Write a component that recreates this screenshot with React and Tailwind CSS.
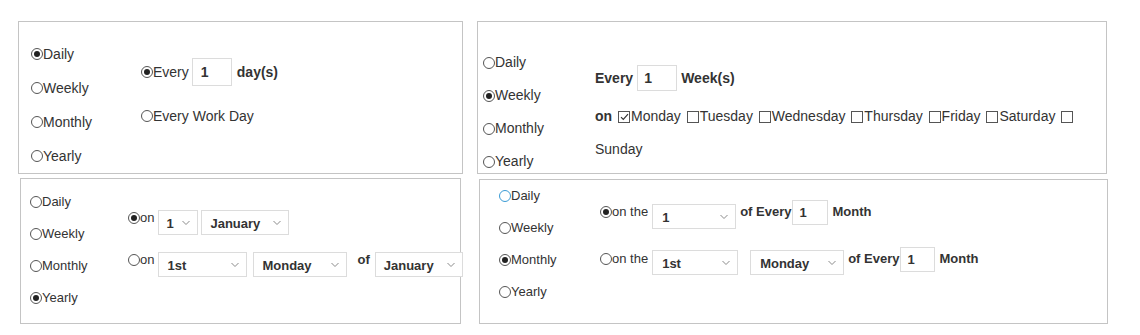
const Radio = ({ checked = false, blue = false }) => (
  <span
    className={`inline-flex items-center justify-center w-[12px] h-[12px] rounded-full border shrink-0 ${
      blue ? 'border-[#3a9bd5]' : 'border-[#555]'
    }`}
  >
    {checked && <span className="w-[6px] h-[6px] rounded-full bg-[#222]" />}
  </span>
);

const Check = ({ checked = false }) => (
  <span className="inline-flex items-center justify-center w-[12px] h-[12px] border border-[#555] shrink-0 ml-[2px] mr-[1px] bg-white">
    {checked && (
      <svg width="9" height="8" viewBox="0 0 9 8" fill="none" stroke="#333" strokeWidth="1.2">
        <path d="M1 4.2l2.3 2.3L8 1.2" />
      </svg>
    )}
  </span>
);

const Chevron = () => (
  <svg
    width="8"
    height="5"
    viewBox="0 0 8 5"
    fill="none"
    stroke="#8a8a8a"
    strokeWidth="1"
    className="absolute right-[7px] top-1/2 -translate-y-1/2"
  >
    <path d="M0.5 0.5L4 4l3.5-3.5" />
  </svg>
);

const Select = ({ value, className = '' }) => (
  <div
    className={`relative flex items-end h-[25px] pb-[3px] border border-[#dcdcdc] bg-white font-bold leading-[15px] shrink-0 ${className}`}
  >
    {value}
    <Chevron />
  </div>
);

const NumBox = ({ className = '' }) => (
  <div className={`flex items-center border border-[#dcdcdc] bg-white font-bold shrink-0 ${className}`}>1</div>
);

const Option = ({ label, checked, blue, className }) => (
  <div className={`flex items-center ${className}`}>
    <Radio checked={checked} blue={blue} />
    <span>{label}</span>
  </div>
);

const types = ['Daily', 'Weekly', 'Monthly', 'Yearly'];

export default function App() {
  return (
    <div className="w-[1140px] h-[335px] bg-white text-[#333] font-['Liberation_Sans',Arial,sans-serif]">
      <div className="flex items-start pt-[21px] pl-[18px] gap-[14px]">
        {/* Daily */}
        <div className="flex w-[445px] h-[153px] border border-[#c4c4c4] text-[14px]">
          <div className="w-[122px] pl-[12px] pt-[15px] shrink-0">
            {types.map((t) => (
              <Option key={t} label={t} checked={t === 'Daily'} className="h-[34px]" />
            ))}
          </div>
          <div className="pt-[36px]">
            <div className="flex items-center h-[28px]">
              <Radio checked />
              <span>Every</span>
              <NumBox className="ml-[3px] w-[40px] h-[28px] pl-[8px]" />
              <span className="ml-[5px] font-bold">day(s)</span>
            </div>
            <div className="flex items-center h-[28px] mt-[16px]">
              <Radio />
              <span>Every Work Day</span>
            </div>
          </div>
        </div>

        {/* Weekly */}
        <div className="flex w-[630px] h-[153px] border border-[#c4c4c4] text-[14px]">
          <div className="w-[117px] pl-[5px] pt-[24px] shrink-0">
            {types.map((t) => (
              <Option key={t} label={t} checked={t === 'Weekly'} className="h-[33px]" />
            ))}
          </div>
          <div className="pt-[43px]">
            <div className="flex items-center h-[26px]">
              <span className="font-bold">Every</span>
              <NumBox className="ml-[4px] w-[40px] h-[26px] pl-[6px]" />
              <span className="ml-[4px] font-bold">Week(s)</span>
            </div>
            <div className="mt-[9px] leading-[33px]">
              <div className="flex items-center h-[33px] whitespace-pre">
                <span className="font-bold">on </span>
                <Check checked />
                <span>Monday </span>
                <Check />
                <span>Tuesday </span>
                <Check />
                <span>Wednesday </span>
                <Check />
                <span>Thursday </span>
                <Check />
                <span>Friday </span>
                <Check />
                <span>Saturday </span>
                <Check />
              </div>
              <div className="h-[33px]">Sunday</div>
            </div>
          </div>
        </div>
      </div>

      <div className="flex items-start mt-[4px] pl-[20px] gap-[18px]">
        {/* Yearly */}
        <div className="flex w-[441px] h-[146px] border border-[#c4c4c4] text-[13px]">
          <div className="w-[107px] pl-[9px] pt-[7px] shrink-0">
            {types.map((t) => (
              <Option key={t} label={t} checked={t === 'Yearly'} className="h-[32px]" />
            ))}
          </div>
          <div className="pt-[31px]">
            <div className="flex items-start">
              <div className="flex items-center h-[15px]">
                <Radio checked />
                <span>on</span>
              </div>
              <Select value="1" className="ml-[4px] w-[40px] pl-[7px]" />
              <Select value="January" className="ml-[3px] w-[88px] pl-[8px]" />
            </div>
            <div className="flex items-start mt-[17px]">
              <div className="flex items-center h-[15px]">
                <Radio />
                <span>on</span>
              </div>
              <Select value="1st" className="ml-[4px] w-[89px] pl-[8px]" />
              <Select value="Monday" className="ml-[6px] w-[94px] pl-[8px]" />
              <span className="ml-[10px] font-bold leading-[15px]">of</span>
              <Select value="January" className="ml-[5px] w-[88px] pl-[8px]" />
            </div>
          </div>
        </div>

        {/* Monthly */}
        <div className="flex w-[629px] h-[145px] mt-[1px] border border-[#c4c4c4] text-[13px]">
          <div className="w-[120px] pl-[19px] pt-0 shrink-0">
            {types.map((t) => (
              <Option key={t} label={t} checked={t === 'Monthly'} blue={t === 'Daily'} className="h-[32px]" />
            ))}
          </div>
          <div className="pt-[20px]">
            <div className="flex items-start">
              <div className="flex items-center h-[15px] mt-[4px]">
                <Radio checked />
                <span>on the</span>
              </div>
              <Select value="1" className="ml-[4px] mt-[4px] w-[84px] pl-[9px]" />
              <span className="ml-[4px] mt-[4px] font-bold leading-[15px]">of Every</span>
              <NumBox className="ml-[1px] w-[36px] h-[25px] pl-[6px]" />
              <span className="ml-[4px] mt-[4px] font-bold leading-[15px]">Month</span>
            </div>
            <div className="flex items-start mt-[18px]">
              <div className="flex items-center h-[15px] mt-[4px]">
                <Radio />
                <span>on the</span>
              </div>
              <Select value="1st" className="ml-[4px] mt-[3px] w-[86px] pl-[9px]" />
              <Select value="Monday" className="ml-[12px] mt-[3px] w-[94px] pl-[9px]" />
              <span className="ml-[4px] mt-[4px] font-bold leading-[15px]">of Every</span>
              <NumBox className="ml-[1px] w-[35px] h-[25px] pl-[6px]" />
              <span className="ml-[4px] mt-[4px] font-bold leading-[15px]">Month</span>
            </div>
          </div>
        </div>
      </div>
    </div>
  );
}
